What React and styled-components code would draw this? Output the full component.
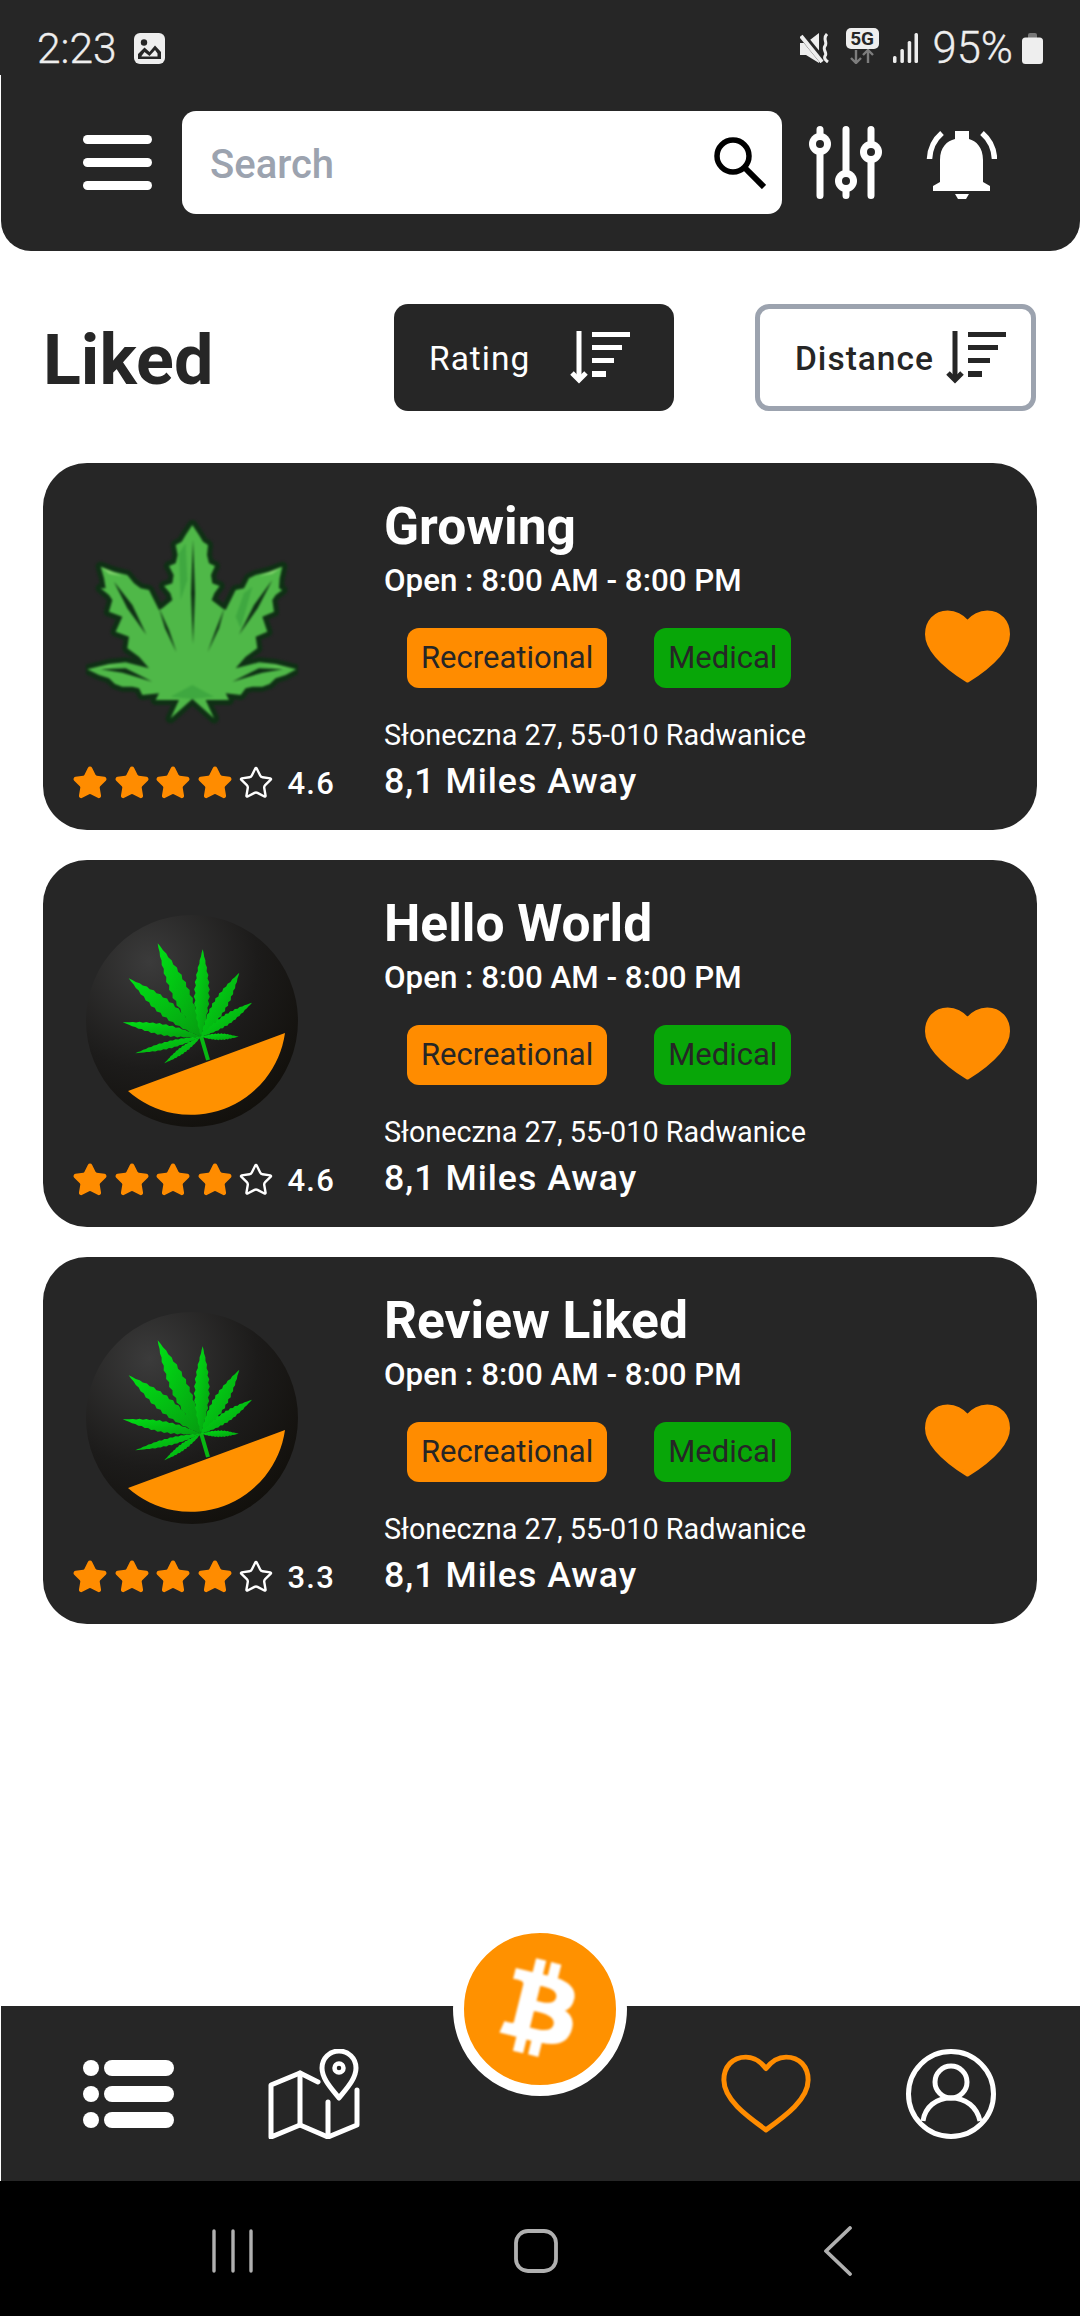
import React from 'react';
import styled, { createGlobalStyle } from 'styled-components';
import { Star } from 'lucide-react';

const dark = '#262626';
const orange = '#ff8c00';

const GlobalStyle = createGlobalStyle`
  html, body {
    margin: 0;
    width: 1080px;
    height: 2316px;
    overflow: hidden;
    background: #fff;
    font-family: Roboto, "Liberation Sans", sans-serif;
  }
`;

const Page = styled.div`
  display: flex;
  flex-direction: column;
  width: 1080px;
  height: 2316px;
`;

const StatusBar = styled.div`
  display: flex;
  align-items: flex-start;
  height: 75px;
  box-sizing: border-box;
  padding: 28px 37px 0 37px;
  background: ${ dark };
  color: #eee;
`;

const Clock = styled.span`
  font-size: 42.5px;
  line-height: 42px;
  font-weight: 300;
  -webkit-text-stroke: .3px #eee;
`;

const PhotoIcon = styled.svg`
  width: 31px;
  height: 31px;
  margin: 5px 0 0 17px;
`;

const StatusIcons = styled.div`
  display: flex;
  align-items: flex-start;
  margin-left: auto;
`;

const MuteIcon = styled.svg`
  width: 30px;
  height: 30px;
  margin-top: 5px;
`;

const NetworkBox = styled.div`
  display: flex;
  flex-direction: column;
  align-items: center;
  width: 33px;
  margin-left: 16px;
`;

const NetworkBadge = styled.span`
  width: 33px;
  height: 21px;
  border-radius: 5px;
  background: #eee;
  color: ${ dark };
  font-size: 19px;
  line-height: 21px;
  font-weight: 700;
  text-align: center;
`;

const NetworkArrows = styled.svg`
  width: 26px;
  height: 15px;
`;

const SignalIcon = styled.svg`
  width: 25px;
  height: 30px;
  margin: 5px 0 0 14px;
`;

const BatteryText = styled.span`
  font-size: 43.5px;
  line-height: 42px;
  font-weight: 300;
  margin-left: 15px;
  -webkit-text-stroke: .3px #eee;
`;

const BatteryIcon = styled.svg`
  width: 21px;
  height: 31px;
  margin: 5px 0 0 9px;
`;

const Header = styled.header`
  display: flex;
  align-items: center;
  height: 176px;
  box-sizing: border-box;
  margin-left: 1px;
  padding: 0 0 1px 82px;
  background: ${ dark };
  border-radius: 0 0 30px 30px;
`;

const MenuIcon = styled.svg`
  width: 69px;
  height: 55px;
`;

const SearchBox = styled.div`
  display: flex;
  align-items: center;
  justify-content: space-between;
  width: 600px;
  height: 103px;
  box-sizing: border-box;
  margin-left: 30px;
  padding: 0 16px 0 28px;
  background: #fff;
  border-radius: 14px;
`;

const SearchHint = styled.span`
  padding-top: 3px;
  font-size: 40px;
  font-weight: 500;
  color: #9ca3af;
`;

const SearchIcon = styled.svg`
  width: 52px;
  height: 52px;
`;

const SlidersIcon = styled.svg`
  width: 74px;
  height: 73px;
  margin-left: 27px;
`;

const BellIcon = styled.svg`
  width: 71px;
  height: 73px;
  margin-left: 43px;
`;

const TitleRow = styled.div`
  display: flex;
  align-items: center;
  padding: 53px 44px 52px 43px;
`;

const Title = styled.h1`
  flex: 1;
  margin: 0;
  padding-top: 5px;
  font-size: 70px;
  line-height: 102px;
  font-weight: 700;
  color: ${ dark };
`;

const SortButton = styled.button`
  display: flex;
  align-items: center;
  gap: ${ p => p.$gap }px;
  width: ${ p => p.$active ? 280 : 281 }px;
  height: 107px;
  box-sizing: border-box;
  margin-left: ${ p => p.$left }px;
  padding: 2px 0 0 35px;
  border: ${ p => p.$active ? 'none' : '5px solid #9ca3af' };
  border-radius: 14px;
  background: ${ p => p.$active ? dark : '#fff' };
  color: ${ p => p.$active ? '#fff' : dark };
  font-family: inherit;
  font-size: 33.5px;
  font-weight: ${ p => p.$active ? 400 : 500 };
  letter-spacing: 1px;
`;

const SortGlyph = styled.svg`
  flex: none;
  width: 60px;
  height: 53px;
  margin-top: -2px;
`;

const CardList = styled.main`
  flex: 1;
  display: flex;
  flex-direction: column;
  gap: 30px;
  padding: 0 43px;
`;

const Card = styled.article`
  display: flex;
  width: 994px;
  height: 367px;
  box-sizing: border-box;
  padding: 0 27px 0 31px;
  background: ${ dark };
  border-radius: 44px;
`;

const LeftColumn = styled.div`
  display: flex;
  flex-direction: column;
  flex: none;
  width: 310px;
  padding-top: 55px;
`;

const Logo = styled.svg`
  display: block;
  width: 212px;
  height: 212px;
  margin-left: 12px;
`;

const BlurLogo = styled(Logo)`
  filter: blur(.9px);
`;

const RatingRow = styled.div`
  display: flex;
  align-items: center;
  gap: 5.5px;
  height: 36px;
  margin: 35px 0 0 -2px;
`;

const RatingStar = styled(Star)`
  flex: none;
  fill: ${ p => p.$filled ? orange : 'none' };
  color: ${ p => p.$filled ? orange : '#fff' };
`;

const RatingValue = styled.span`
  margin-left: 8px;
  font-size: 31px;
  font-weight: 500;
  letter-spacing: 1.2px;
  color: #fff;
`;

const Info = styled.div`
  flex: 1;
  padding-top: 36px;
`;

const Name = styled.h2`
  margin: 0;
  font-size: 51.5px;
  line-height: 56px;
  font-weight: 700;
  color: #fff;
`;

const Hours = styled.div`
  margin-top: 8px;
  font-size: 31.3px;
  line-height: 36px;
  font-weight: 500;
  color: #fff;
`;

const Tags = styled.div`
  display: flex;
  gap: 47px;
  margin: 29px 0 0 23px;
`;

const Tag = styled.span`
  height: 60px;
  padding: 0 14px;
  border-radius: 12px;
  background: ${ p => p.$color };
  color: ${ dark };
  font-size: 31px;
  line-height: 60px;
`;

const Address = styled.div`
  margin-top: 30px;
  font-size: 28.8px;
  line-height: 34px;
  color: #fff;
`;

const Distance = styled.div`
  margin-top: 9px;
  font-size: 35.7px;
  line-height: 40px;
  font-weight: 500;
  letter-spacing: 1px;
  color: #fff;
`;

const LikeIcon = styled.svg`
  flex: none;
  width: 85px;
  height: 73px;
  margin-top: 147px;
`;

const BottomNav = styled.nav`
  position: relative;
  display: flex;
  align-items: center;
  justify-content: space-between;
  height: 175px;
  box-sizing: border-box;
  margin-left: 1px;
  padding: 0 84px 0 82px;
  background: ${ dark };
`;

const NavGroup = styled.div`
  display: flex;
  align-items: center;
  gap: 94px;
`;

const NavIcon = styled.svg`
  display: block;
  width: ${ p => p.$w }px;
  height: ${ p => p.$h }px;
`;

const CoinButton = styled.div`
  position: absolute;
  top: -84px;
  left: 452px;
  display: flex;
  width: 152px;
  height: 152px;
  border: 11px solid #fff;
  border-radius: 50%;
  background: #ff9100;
`;

const CoinGlyph = styled.svg`
  width: 152px;
  height: 152px;
  filter: blur(1px);
`;

const SystemBar = styled.div`
  display: grid;
  grid-template-columns: repeat(3, 302.5px);
  justify-items: center;
  align-items: center;
  height: 135px;
  padding-left: 82px;
  background: #000;
`;

const SystemIcon = styled.svg`
  width: 50px;
  height: 50px;
  margin-top: 5px;
`;

// serrated lens shape running from the base point to the tip
const blade = (bx, by, tx, ty, w, teeth = 12) => {
  const dx = tx - bx;
  const dy = ty - by;
  const len = Math.hypot(dx, dy);
  const nx = -dy / len;
  const ny = dx / len;
  const side = s => {
    const pts = [];
    for (let i = 1; i < teeth * 2; i++) {
      const t = i / (teeth * 2);
      const half = (w / 2) * Math.sin(Math.PI * Math.pow(t, 0.95)) * (i % 2 ? 1 : 0.8);
      pts.push(`${ (bx + dx * t + nx * half * s).toFixed(1) } ${ (by + dy * t + ny * half * s).toFixed(1) }`);
    }
    return pts;
  };
  return `M${ bx } ${ by }L${ side(1).join('L') }L${ tx } ${ ty }L${ side(-1).reverse().join('L') }Z`;
};

const blades = [
  [71.7, 28.3, 19],
  [116.7, 34.3, 16],
  [153.3, 57.7, 15],
  [166, 87.7, 11],
  [152.7, 121.7, 7],
  [42.7, 63.3, 17],
  [36.7, 107.3, 12],
  [49.3, 138.3, 8],
  [78.3, 148.3, 7],
];

const CircleLogo = ({ id }) => (
  <Logo viewBox="0 0 212 212">
    <defs>
      <radialGradient id={ `ball${ id }` } cx="0.3" cy="0.22" r="0.85">
        <stop offset="0" stopColor="#3b3b3b" />
        <stop offset="0.6" stopColor="#1c1b1a" />
        <stop offset="1" stopColor="#12100c" />
      </radialGradient>
      <linearGradient id={ `leaf${ id }` } x1="0" y1="0" x2="1" y2="1">
        <stop offset="0" stopColor="#00e015" />
        <stop offset="1" stopColor="#069c10" />
      </linearGradient>
    </defs>
    <circle cx="106" cy="106" r="106" fill={ `url(#ball${ id })` } />
    <path d="M42 176L199 118A95 95 0 0 1 42 176Z" fill="#ff9100" />
    <path d="M115 121L122 145" stroke="#08b812" strokeWidth="4" />
    { blades.map(([x, y, w]) => (
      <path key={ `${ x }` } d={ blade(115, 121.7, x, y, w) } fill={ `url(#leaf${ id })` } />
    )) }
  </Logo>
);

const leafOutline = '400,75 420,105 432,125 447,135 444,165 450,190 468,198 456,225 460,250 482,258 466,280 458,300 490,325 500,330 520,290 530,270 555,265 570,235 590,225 630,215 670,200 662,235 660,265 670,270 650,285 640,300 645,335 610,350 625,395 590,410 595,445 560,470 530,505 600,487 650,492 712,508 680,525 650,535 632,552 610,560 580,560 560,565 545,585 500,580 510,600 440,600 465,655 400,597 335,655 360,600 290,600 300,580 250,585 240,565 220,560 190,560 168,552 150,535 120,525 85,508 150,492 200,487 270,505 240,470 205,445 210,410 170,395 190,350 150,335 160,300 150,285 125,265 140,265 135,235 125,200 165,215 205,225 225,250 245,265 270,270 280,290 300,330 310,325 340,300 334,280 315,258 340,250 344,225 330,198 350,190 356,165 350,135 368,125 380,105';

const GrowingLeaf = () => (
  <BlurLogo viewBox="81 54 636 636">
    <polygon points={ leafOutline } fill="#0f3015" stroke="#0f3015" strokeWidth="30" strokeLinejoin="round" />
    <polygon points={ leafOutline } fill="#4fb848" />
    <g fill="#0f3015">
      <polygon points="402,118 408,280 402,432 396,280" />
      <polygon points="165,245 220,315 262,404 205,325" />
      <polygon points="640,240 585,315 540,404 596,325" />
      <polygon points="300,325 330,390 352,456 318,385" />
      <polygon points="496,325 470,390 446,456 480,385" />
      <polygon points="125,508 200,505 280,545 190,518" />
      <polygon points="672,508 600,505 520,545 610,518" />
    </g>
    <g fill="#3fa840">
      <polygon points="335,590 400,555 465,590 400,597" />
      <polygon points="555,280 580,260 545,385 530,350" />
      <polygon points="360,160 380,130 385,240 365,300" />
    </g>
    <g fill="#7ed06a">
      <polygon points="125,200 190,228 150,222" />
      <polygon points="670,200 600,228 640,222" />
      <polygon points="90,508 200,490 150,500" />
      <polygon points="708,508 600,490 650,500" />
    </g>
  </BlurLogo>
);

const Heart = () => (
  <LikeIcon viewBox="0 0 86 73">
    <path
      d="M43 12C37 5 30 2 23 2C10 2 2 12 2 24C2 42 24 59 43 71C62 59 84 42 84 24C84 12 76 2 63 2C56 2 49 5 43 12Z"
      fill={ orange }
      stroke={ orange }
      strokeWidth="4"
      strokeLinejoin="round"
    />
  </LikeIcon>
);

const SortIcon = ({ color }) => (
  <SortGlyph viewBox="0 0 60 53" fill={ color }>
    <rect x="6.5" y="0" width="5" height="48" />
    <path d="M2 42L9 49L16 42" fill="none" stroke={ color } strokeWidth="5" />
    <rect x="22" y="1" width="38" height="5" />
    <rect x="22" y="14" width="30" height="5" />
    <rect x="22" y="27" width="22" height="5" />
    <rect x="22" y="40" width="14" height="6" />
  </SortGlyph>
);

const places = [
  { name: 'Growing', rating: '4.6', logo: <GrowingLeaf /> },
  { name: 'Hello World', rating: '4.6', logo: <CircleLogo id="a" /> },
  { name: 'Review Liked', rating: '3.3', logo: <CircleLogo id="b" /> },
];

const PlaceCard = ({ place }) => (
  <Card>
    <LeftColumn>
      { place.logo }
      <RatingRow>
        { [0, 1, 2, 3, 4].map(i => (
          <RatingStar key={ i } size={ 36 } strokeWidth={ i < 4 ? 2 : 1.6 } $filled={ i < 4 } />
        )) }
        <RatingValue>{ place.rating }</RatingValue>
      </RatingRow>
    </LeftColumn>
    <Info>
      <Name>{ place.name }</Name>
      <Hours>Open : 8:00 AM - 8:00 PM</Hours>
      <Tags>
        <Tag $color="#ff8c00">Recreational</Tag>
        <Tag $color="#08a608">Medical</Tag>
      </Tags>
      <Address>Słoneczna 27, 55-010 Radwanice</Address>
      <Distance>8,1 Miles Away</Distance>
    </Info>
    <Heart />
  </Card>
);

export default function App() {
  return (
    <Page>
      <GlobalStyle />
      <StatusBar>
        <Clock>2:23</Clock>
        <PhotoIcon viewBox="0 0 31 31">
          <rect width="31" height="31" rx="6" fill="#eee" />
          <circle cx="10" cy="9.5" r="3.2" fill={ dark } />
          <path d="M4 26V21L10.5 14.5L15.5 19L21 12.5L27 19V26Z" fill={ dark } />
          <path d="M7.5 23.5V23L10.5 19L15.5 23L21 17L23.5 20.5V23.5Z" fill="#eee" />
        </PhotoIcon>
        <StatusIcons>
          <MuteIcon viewBox="0 0 30 30">
            <path d="M0 10H6L19 0V30L6 22H0Z" fill="#eee" />
            <path d="M1 1L23 28" stroke={ dark } strokeWidth="7" />
            <path d="M1 3L22 29" stroke="#eee" strokeWidth="4" />
            <path d="M27 1C22 6 28 9 25 13C22 17 28 20 25 23C24 25 25 27 28 29" stroke="#eee" strokeWidth="3" fill="none" />
          </MuteIcon>
          <NetworkBox>
            <NetworkBadge>5G</NetworkBadge>
            <NetworkArrows viewBox="0 0 26 15" stroke="#7d7d7d" strokeWidth="2.4" fill="none">
              <path d="M7 1V14M2 9L7 14L12 9" />
              <path d="M19 14V1M14 6L19 1L24 6" />
            </NetworkArrows>
          </NetworkBox>
          <SignalIcon viewBox="0 0 25 30" fill="#eee">
            <rect x="0" y="23" width="3.5" height="7" rx="1.5" />
            <rect x="7.4" y="16" width="3.5" height="14" rx="1.5" />
            <rect x="14.7" y="8" width="3.5" height="22" rx="1.5" />
            <rect x="21.5" y="0" width="3.5" height="30" rx="1.5" />
          </SignalIcon>
          <BatteryText>95%</BatteryText>
          <BatteryIcon viewBox="0 0 21 31">
            <path d="M6 5V2Q6 0 8 0H13Q15 0 15 2V5Z" fill="#777" />
            <rect y="4.5" width="21" height="26.5" rx="3.5" fill="#eee" />
          </BatteryIcon>
        </StatusIcons>
      </StatusBar>

      <Header>
        <MenuIcon viewBox="0 0 69 55" fill="#fff">
          <rect width="69" height="9" rx="4.5" />
          <rect y="23" width="69" height="9" rx="4.5" />
          <rect y="46" width="69" height="9" rx="4.5" />
        </MenuIcon>
        <SearchBox>
          <SearchHint>Search</SearchHint>
          <SearchIcon viewBox="0 0 52 52" fill="none" stroke="#000">
            <circle cx="19" cy="19" r="16" strokeWidth="5.5" />
            <path d="M30 30L50 50" strokeWidth="6" />
          </SearchIcon>
        </SearchBox>
        <SlidersIcon viewBox="0 0 74 73">
          <g stroke="#fff" strokeWidth="7" strokeLinecap="round">
            <path d="M11 3.5V69.5M37 3.5V69.5M62 3.5V69.5" />
          </g>
          <g fill="#fff">
            <circle cx="11" cy="18" r="11" />
            <circle cx="37" cy="55" r="11" />
            <circle cx="62" cy="26" r="11" />
          </g>
          <g fill={ dark }>
            <circle cx="11" cy="18" r="4" />
            <circle cx="37" cy="55" r="4" />
            <circle cx="62" cy="26" r="4" />
          </g>
        </SlidersIcon>
        <BellIcon viewBox="926 126 71 73">
          <path fill="#fff" d="M955 131H969V139C976 141 983 147 983 160V182L990 186V191H933V186L940 182V160C940 147 947 141 955 139Z" />
          <path fill="#fff" d="M955 194H969L966 199H958Z" />
          <path fill="none" stroke="#fff" strokeWidth="5.5" d="M929.5 159C930 148 935 139 942 133M994.5 159C994 148 989 139 982 133" />
        </BellIcon>
      </Header>

      <TitleRow>
        <Title>Liked</Title>
        <SortButton $active $gap={ 40 } $left={ 0 }>
          Rating
          <SortIcon color="#fff" />
        </SortButton>
        <SortButton $gap={ 12 } $left={ 81 }>
          Distance
          <SortIcon color={ dark } />
        </SortButton>
      </TitleRow>

      <CardList>
        { places.map(place => <PlaceCard key={ place.name } place={ place } />) }
      </CardList>

      <BottomNav>
        <NavGroup>
          <NavIcon $w={ 91 } $h={ 68 } viewBox="0 0 91 68" fill="#fff">
            <ellipse cx="8" cy="8" rx="8" ry="8" />
            <ellipse cx="8" cy="34" rx="8" ry="8" />
            <ellipse cx="8" cy="60" rx="8" ry="8" />
            <rect x="21" y="0" width="70" height="16" rx="8" />
            <rect x="21" y="26" width="70" height="16" rx="8" />
            <rect x="21" y="52" width="70" height="16" rx="8" />
          </NavIcon>
          <NavIcon $w={ 92 } $h={ 90 } viewBox="268 2049 92 90" fill="none" stroke="#fff" strokeWidth="5" strokeLinecap="round" strokeLinejoin="round">
            <path d="M318 2082L300 2073L271 2085V2137L300 2125L328 2137L357 2125V2090" />
            <path d="M300 2073V2125M328 2102V2137" />
            <path d="M339 2098C332 2089 322 2079 322 2068C322 2058 330 2051 339 2051C348 2051 356 2058 356 2068C356 2079 346 2089 339 2098Z" />
            <circle cx="339" cy="2068" r="4.5" strokeWidth="4.5" />
          </NavIcon>
        </NavGroup>
        <CoinButton>
          <CoinGlyph viewBox="0 0 24 24" fill="#fff" stroke="#fff" strokeWidth=".3">
            <path d="M17.288 10.291c.24-1.59-.974-2.45-2.64-3.03l.54-2.153-1.315-.33-.525 2.107c-.345-.087-.705-.167-1.064-.25l.526-2.127-1.32-.33-.54 2.165c-.285-.067-.565-.132-.84-.2l-1.815-.45-.35 1.407s.975.225.955.236c.535.136.63.486.615.766l-1.477 5.92c-.075.166-.24.406-.614.314.015.02-.96-.24-.96-.24l-.66 1.51 1.71.426.93.242-.54 2.19 1.32.327.54-2.17c.36.1.705.19 1.05.273l-.51 2.154 1.32.33.545-2.19c2.24.427 3.93.257 4.64-1.774.57-1.637-.03-2.58-1.217-3.196.854-.193 1.5-.76 1.68-1.93h.01zm-3.01 4.22c-.404 1.64-3.157.75-4.05.53l.72-2.9c.896.23 3.757.67 3.33 2.37zm.41-4.24c-.37 1.49-2.662.735-3.405.55l.654-2.64c.744.18 3.137.524 2.75 2.084v.006z" />
          </CoinGlyph>
        </CoinButton>
        <NavGroup>
          <NavIcon $w={ 90 } $h={ 79 } viewBox="0 0 94 82" fill="none" stroke={ orange } strokeWidth="5.2" strokeLinejoin="round">
            <path d="M47 15C41 7 33 3 26 3C12 3 3 13 3 27C3 47 26 64 47 79C68 64 91 47 91 27C91 13 82 3 68 3C61 3 53 7 47 15Z" />
          </NavIcon>
          <NavIcon $w={ 91 } $h={ 90 } viewBox="905 2049 91 90" fill="none" stroke="#fff" strokeWidth="5">
            <circle cx="951" cy="2094" r="42.5" />
            <circle cx="951" cy="2082" r="16" />
            <path d="M923 2121C925 2107 936 2098 951 2098C966 2098 977 2107 980 2121" />
          </NavIcon>
        </NavGroup>
      </BottomNav>

      <SystemBar>
        <SystemIcon viewBox="0 0 50 50" stroke="#b0b0b0" strokeWidth="3.4" strokeLinecap="round" fill="none">
          <path d="M6 5V45M25 5V45M43 5V45" />
        </SystemIcon>
        <SystemIcon viewBox="0 0 50 50" stroke="#b0b0b0" strokeWidth="3.8" fill="none">
          <rect x="5" y="5" width="40" height="40" rx="12" />
        </SystemIcon>
        <SystemIcon viewBox="0 0 50 50" stroke="#b0b0b0" strokeWidth="3.8" strokeLinecap="round" strokeLinejoin="round" fill="none">
          <path d="M37 2L13 25L37 48" />
        </SystemIcon>
      </SystemBar>
    </Page>
  );
}
